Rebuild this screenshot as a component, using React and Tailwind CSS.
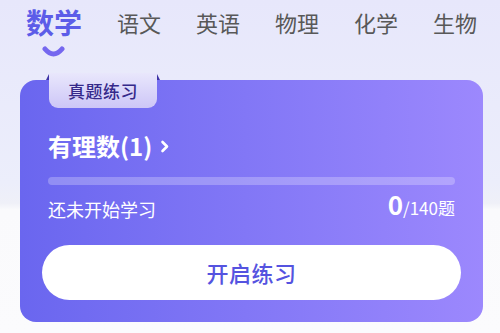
import React from "react";

const font = { fontFamily: '"Noto Sans CJK SC", "Noto Sans", sans-serif' };

const tabs = ["语文", "英语", "物理", "化学", "生物"];

export default function App() {
  return (
    <div
      className="w-[500px] h-[333px] overflow-hidden bg-[linear-gradient(180deg,#e7e7fb_0%,#eceefb_55%,#eff0f8_61%,#fafafc_63%,#fbfbfd_100%)]"
      style={font}
    >
      {/* Subject tabs */}
      <div className="flex items-center pl-[26px] pt-[5px] h-[38px] gap-[35px]">
        <span className="text-[28px] leading-[34px] font-bold text-[#5c5ce8]">数学</span>
        {tabs.map((t) => (
          <span key={t} className="text-[22px] leading-[30px] text-[#585858]">
            {t}
          </span>
        ))}
      </div>
      <div className="pl-[42px] pt-[8px] h-[18px]">
        <svg width="23" height="12" viewBox="0 0 23 12">
          <path
            d="M3 3 Q11.5 13 20 3"
            fill="none"
            stroke="#7567ef"
            strokeWidth="5"
            strokeLinecap="round"
          />
        </svg>
      </div>

      {/* Card */}
      <div className="relative mx-[20px] mt-[24px] w-[463px] h-[242px] rounded-[16px] bg-linear-to-r from-[#6a66ef] to-[#9c88fd] px-[28px] pt-[50px]">
        {/* ribbon label */}
        <div className="absolute left-[29px] top-[-7px]">
          <div className="absolute left-[-3px] top-[1px] w-0 h-0 border-l-[3px] border-l-transparent border-b-[6px] border-b-[#3e33a6]" />
          <div className="absolute right-[-3px] top-[1px] w-0 h-0 border-r-[3px] border-r-transparent border-b-[6px] border-b-[#3e33a6]" />
          <div className="w-[108px] h-[35px] rounded-b-[9px] bg-linear-to-b from-[#e9e7fc] to-[#cdc6f7] flex items-center justify-center">
            <span className="text-[17px] font-medium text-[#35298a] tracking-[0.5px]">真题练习</span>
          </div>
        </div>

        {/* title */}
        <div className="flex items-center h-[32px] text-white">
          <span className="text-[24px] font-bold leading-[32px]">有理数(1)</span>
          <svg className="ml-[8px] mt-[1px]" width="10" height="13" viewBox="0 0 10 13">
            <path
              d="M2.5 2 L7 6.5 L2.5 11"
              fill="none"
              stroke="white"
              strokeWidth="2.6"
              strokeLinecap="round"
              strokeLinejoin="round"
            />
          </svg>
        </div>

        {/* progress */}
        <div className="mt-[15px] h-[8px] w-full rounded-full bg-white/25" />

        {/* status */}
        <div className="mt-[10px] flex items-end justify-between h-[26px] text-white">
          <span className="text-[18px] leading-[24px]">还未开始学习</span>
          <span className="flex items-baseline leading-[26px]">
            <span className="text-[26px] font-bold">0</span>
            <span className="text-[17px]">/140题</span>
          </span>
        </div>

        {/* button */}
        <div className="mt-[24px] -mx-[6px] h-[55px] rounded-full bg-white flex items-center justify-center">
          <span className="text-[22px] font-medium text-[#5553e0] tracking-[0.5px]">开启练习</span>
        </div>
      </div>
    </div>
  );
}
